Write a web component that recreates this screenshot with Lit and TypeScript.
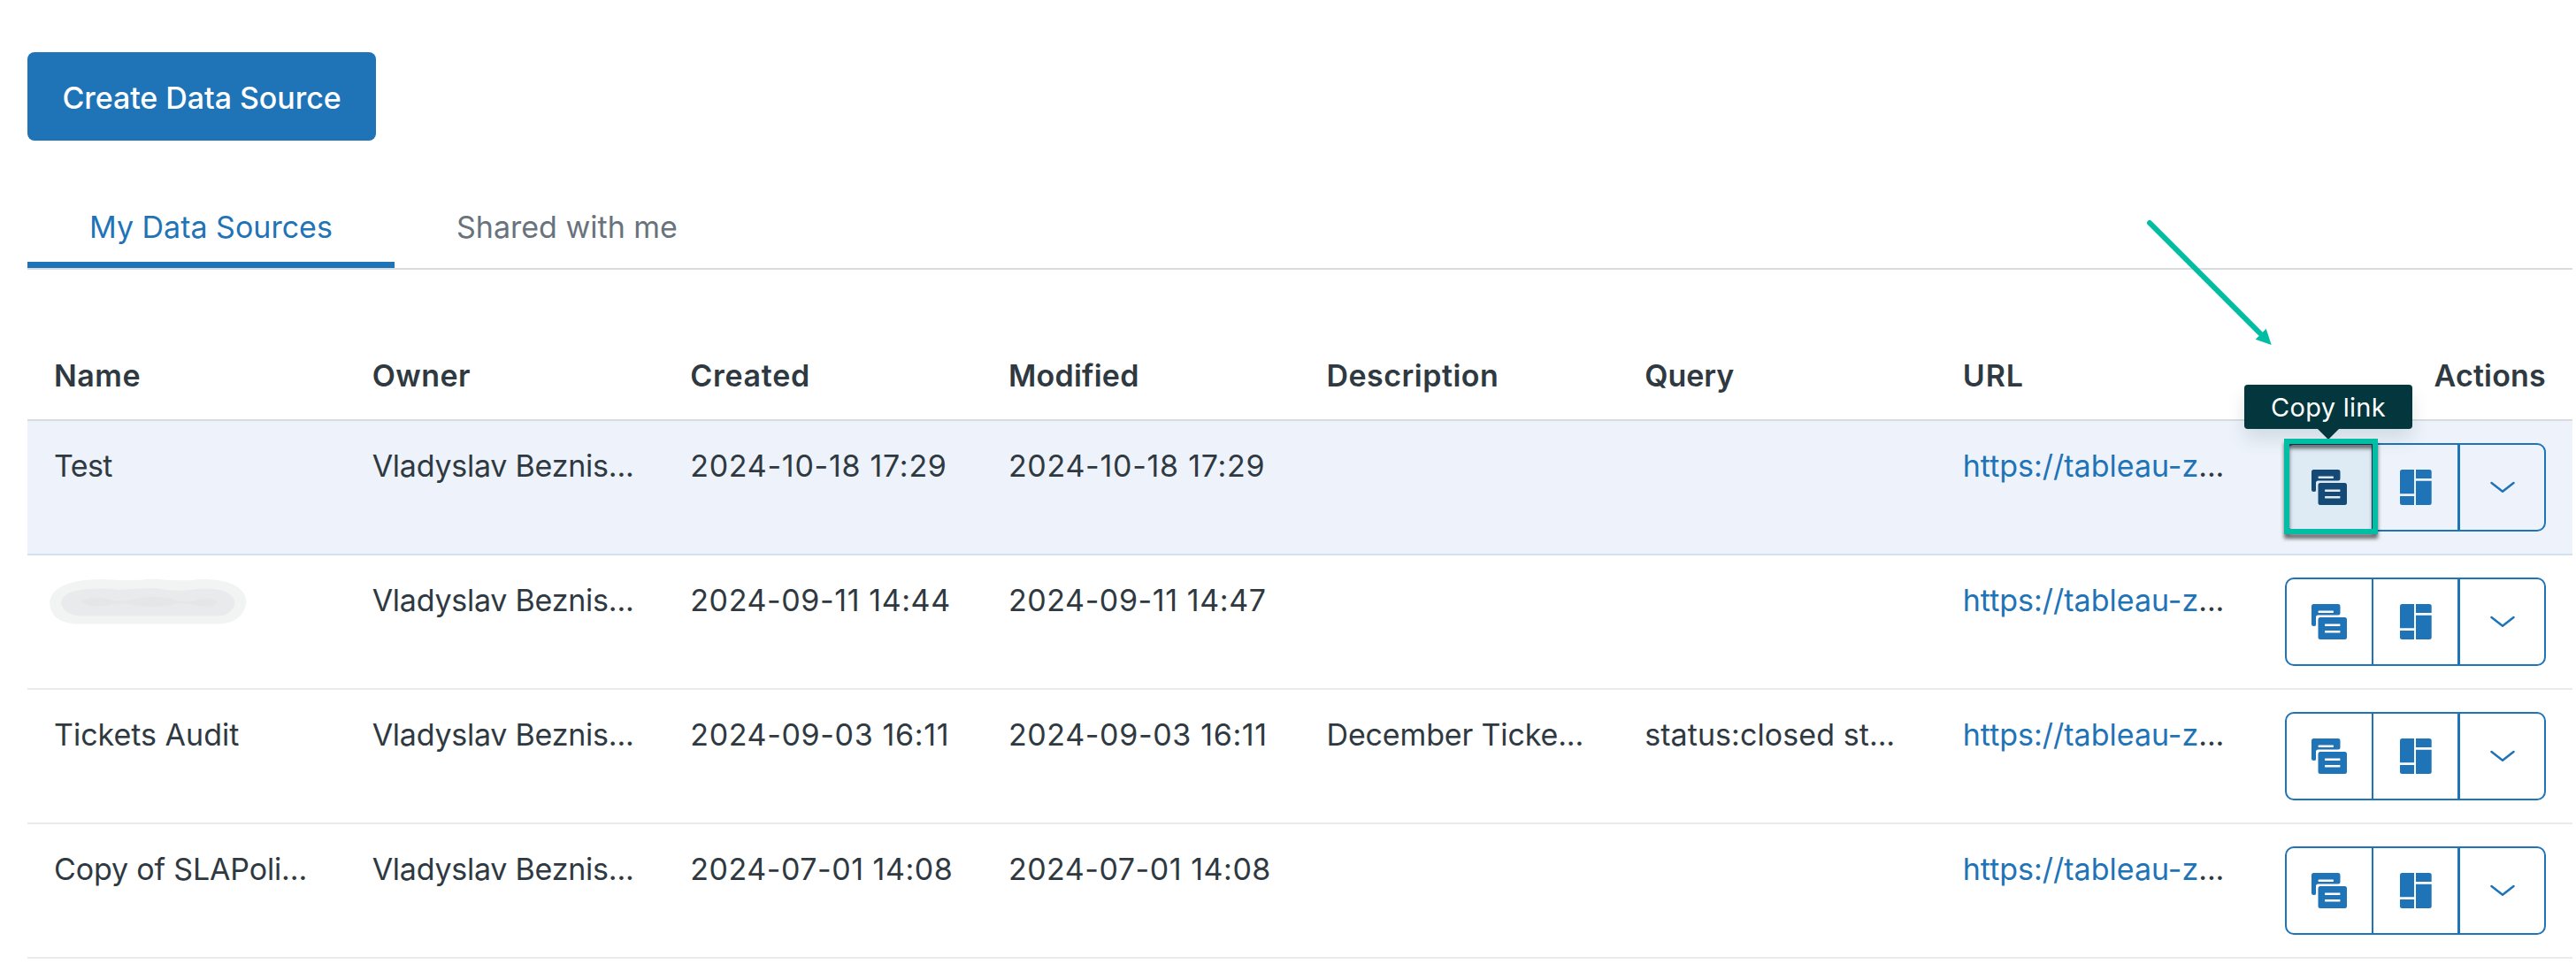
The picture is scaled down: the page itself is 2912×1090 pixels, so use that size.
import { LitElement, html, css, svg, nothing } from "lit";
import { customElement, property } from "lit/decorators.js";
import { classMap } from "lit/directives/class-map.js";
import { styleMap } from "lit/directives/style-map.js";

interface Cell {
  text: string;
  /** Letter spacing in pixels. */
  track?: number;
  /** The value is longer than the column and is cut off. */
  cut?: boolean;
}

interface Source {
  name: Cell | null;
  created: Cell;
  modified: Cell;
  description?: Cell;
  query?: Cell;
}

const HEADERS: Cell[] = [
  { text: "Name", track: 0.5 },
  { text: "Owner", track: 0.45 },
  { text: "Created", track: 0.7 },
  { text: "Modified", track: 0.25 },
  { text: "Description", track: 0.48 },
  { text: "Query" },
  { text: "URL", track: 0.9 },
  { text: "Actions", track: 0.2 },
];

const OWNER: Cell = { text: "Vladyslav Beznis", track: -0.24, cut: true };
const URL_CELL: Cell = { text: "https://tableau-z", track: 0, cut: true };

const SOURCES: Source[] = [
  {
    name: { text: "Test", track: -0.6 },
    created: { text: "2024-10-18 17:29", track: 0.72 },
    modified: { text: "2024-10-18 17:29", track: 0.72 },
  },
  {
    name: null,
    created: { text: "2024-09-11 14:44", track: 0.6 },
    modified: { text: "2024-09-11 14:47", track: 0.6 },
  },
  {
    name: { text: "Tickets Audit" },
    created: { text: "2024-09-03 16:11", track: 0.65 },
    modified: { text: "2024-09-03 16:11", track: 0.65 },
    description: { text: "December Ticke", track: -0.15, cut: true },
    query: { text: "status:closed st", track: 0.08, cut: true },
  },
  {
    name: { text: "Copy of SLAPoli", track: -0.16, cut: true },
    created: { text: "2024-07-01 14:08", track: 0.53 },
    modified: { text: "2024-07-01 14:08", track: 0.53 },
  },
];

const copyIcon = svg`
  <path d="M1 0H12Q13 0 13 1V4Q13 5 12 5H3Q2 5 2 6V9.5Q2 10 1 10Q0 10 0 9V1Q0 0 1 0ZM3.35 3A.35 .5 0 0 0 3.35 4H9.65A.35 .5 0 0 0 9.65 3Z" fill-rule="evenodd"/>
  <path d="M4 6H15Q16 6 16 7V15Q16 16 15 16H4Q3 16 3 15V7Q3 6 4 6ZM6.2 9Q6 9 6 9.5T6.2 10H12.8Q13 10 13 9.5T12.8 9ZM6.2 12Q6 12 6 12.5T6.2 13H12.8Q13 13 13 12.5T12.8 12Z" fill-rule="evenodd"/>`;

const dashboardIcon = svg`
  <path d="M2.5 0H16V27.2H0V2.5Q0 0 2.5 0Z"/>
  <path d="M0 30H16V40H2.5Q0 40 0 37.5Z"/>
  <path d="M18 0H33.2Q35.7 0 35.7 2.5V10H18Z"/>
  <path d="M18 12.7H35.7V37.5Q35.7 40 33.2 40H18Z"/>`;

@customElement("source-actions")
class SourceActions extends LitElement {
  @property({ type: Boolean }) active = false;

  static styles = css`
    :host { display: block; }
    .group { display: flex; position: relative; width: 295px; color: #1f73b7; }
    .btn {
      box-sizing: border-box; height: 100px; width: 99px; padding: 0; margin: 0;
      border: 2px solid #1f73b7; background: none; color: inherit;
      display: flex; align-items: center; justify-content: center;
    }
    .copy { width: 100px; border-radius: 10px 0 0 10px; }
    .board { margin-left: -2px; }
    .more { margin-left: -1px; border-radius: 0 10px 10px 0; }
    .hot { position: relative; background: #deeaf4; color: #144a75; border-color: #144a75; }
    svg { display: block; fill: currentColor; }
    .chev { fill: none; stroke: currentColor; stroke-width: 2.5; stroke-linecap: round; stroke-linejoin: round; }
    .focus {
      position: absolute; box-sizing: border-box; left: -1px; top: -5px; width: 106px; height: 108px;
      border: 6px solid #00bda3; filter: drop-shadow(0 5px 2px rgba(20, 20, 20, 0.62));
    }
    .tip {
      position: absolute; left: -46px; top: -66px; box-sizing: border-box; width: 190px; height: 50px;
      border-radius: 4px; background: #03363d; color: #fff; text-align: center;
      font-size: 29px; line-height: 52px; letter-spacing: 0.3px;
      box-shadow: 0 12px 20px rgba(23, 73, 77, 0.13);
    }
    .tip::after {
      content: ""; position: absolute; left: 83px; top: 50px;
      border: 12px solid transparent; border-top-color: #03363d; border-bottom: 0;
    }
  `;

  render() {
    return html`
      <div class="group">
        <button class=${classMap({ btn: true, copy: true, hot: this.active })}>
          <svg width="40" height="40" viewBox="0 0 16 16">${copyIcon}</svg>
        </button>
        <button class="btn board">
          <svg width="36" height="40" viewBox="0 0 36 40">${dashboardIcon}</svg>
        </button>
        <button class="btn more">
          <svg class="chev" width="28" height="14" viewBox="0 0 28 14"><path d="M1.5 2L14 11.8L26.5 2"/></svg>
        </button>
        ${this.active ? html`<div class="tip">Copy link</div><div class="focus"></div>` : nothing}
      </div>
    `;
  }
}

@customElement("app-root")
class AppRoot extends LitElement {
  static styles = css`
    :host {
      display: block; box-sizing: border-box; height: 1090px; overflow: hidden; position: relative;
      background: #fff; color: #2f3941; padding: 59px 4px 0 31px;
      font-family: Inter, "Liberation Sans", sans-serif; font-size: 34px; line-height: 50px;
    }
    .create {
      display: block; box-sizing: border-box; width: 394px; height: 100px; border: 0; border-radius: 8px;
      padding: 4px 0 0; background: #1f73b7; color: #fff; font: 500 34px/50px Inter, "Liberation Sans", sans-serif;
      letter-spacing: -0.06px;
    }
    .tabs { display: flex; margin-top: 48px; height: 96px; border-bottom: 2px solid #d8dcde; }
    .tab { box-sizing: border-box; height: 96px; padding: 25px 70px 0; color: #68737d; white-space: nowrap; }
    .current { width: 415px; color: #1f73b7; border-bottom: 7px solid #1f73b7; }
    .table { margin-top: 69px; }
    .row { display: grid; grid-template-columns: repeat(8, minmax(0, 1fr)); height: 150px; border-bottom: 2px solid #e9ebed; }
    .head { height: 100px; border-bottom-color: #d8dcde; font-weight: 600; }
    .cell { padding: 26px 30px 0; white-space: nowrap; }
    .last { display: flex; justify-content: flex-end; }
    .row:not(.head) .last { padding: 25px 30px 0 0; }
    .lit { background: #eef3fb; border-bottom-color: #cee2f2; }
    .link { color: #1f73b7; }
    .dots { color: #2f3941; letter-spacing: -0.1px; }
    .redacted { display: block; margin: 0 0 0 -5px; }
    .pointer { position: absolute; left: 2420px; top: 242px; display: block; }
  `;

  private text(cell?: Cell, link = false) {
    if (!cell) return nothing;
    return html`<span class=${classMap({ link })} style=${styleMap({ letterSpacing: `${cell.track ?? 0}px` })}>${cell.text}</span>${cell.cut ? html`<span class="dots">...</span>` : nothing}`;
  }

  private smudge() {
    return html`
      <svg class="redacted" width="223" height="54" viewBox="0 0 223 54">
        <path fill="#f2f4f4" d="M28 4Q45 0 72 1.500Q92 3 117 .5Q140 3 160 2Q178 -.5 196 3Q222 9 222.500 27Q219 50 192 51.500H28Q1 49 0 27Q2 10 28 4Z"/>
        <path fill="#e8eaec" d="M32 13.500Q60 10 78 13Q104 11 120 11Q138 15 158 13Q182 9.500 196 14Q210 19 209.500 29Q206 41 192 42.500H32Q15 39 13 28Q14 17 32 13.500Z"/>
        <path fill="#e4e6e8" d="M36 27Q40 21 60 22Q80 28 95 24Q116 18 137 23Q152 29 164 25Q185 19 190 27Q184 34 164 30Q150 26 137 30Q116 34 95 30Q80 26 62 31Q40 32 36 27Z"/>
      </svg>`;
  }

  render() {
    return html`
      <button class="create">Create Data Source</button>
      <div class="tabs">
        <div class="tab current">My Data Sources</div>
        <div class="tab">Shared with me</div>
      </div>
      <div class="table">
        <div class="row head">
          ${HEADERS.map((h, i) => html`<div class=${classMap({ cell: true, last: i === 7 })}>${this.text(h)}</div>`)}
        </div>
        ${SOURCES.map((s, i) => html`
          <div class=${classMap({ row: true, lit: i === 0 })}>
            <div class="cell">${s.name ? this.text(s.name) : this.smudge()}</div>
            <div class="cell">${this.text(OWNER)}</div>
            <div class="cell">${this.text(s.created)}</div>
            <div class="cell">${this.text(s.modified)}</div>
            <div class="cell">${this.text(s.description)}</div>
            <div class="cell">${this.text(s.query)}</div>
            <div class="cell">${this.text(URL_CELL, true)}</div>
            <div class="cell last"><source-actions ?active=${i === 0}></source-actions></div>
          </div>`)}
      </div>
      <svg class="pointer" width="160" height="160" viewBox="0 0 160 160">
        <path d="M10 10L135 135" stroke="#00bda3" stroke-width="6" stroke-linecap="round"/>
        <path d="M141.700 129.700L147.700 148L129.700 141.700Z" fill="#00bda3"/>
      </svg>
    `;
  }
}
